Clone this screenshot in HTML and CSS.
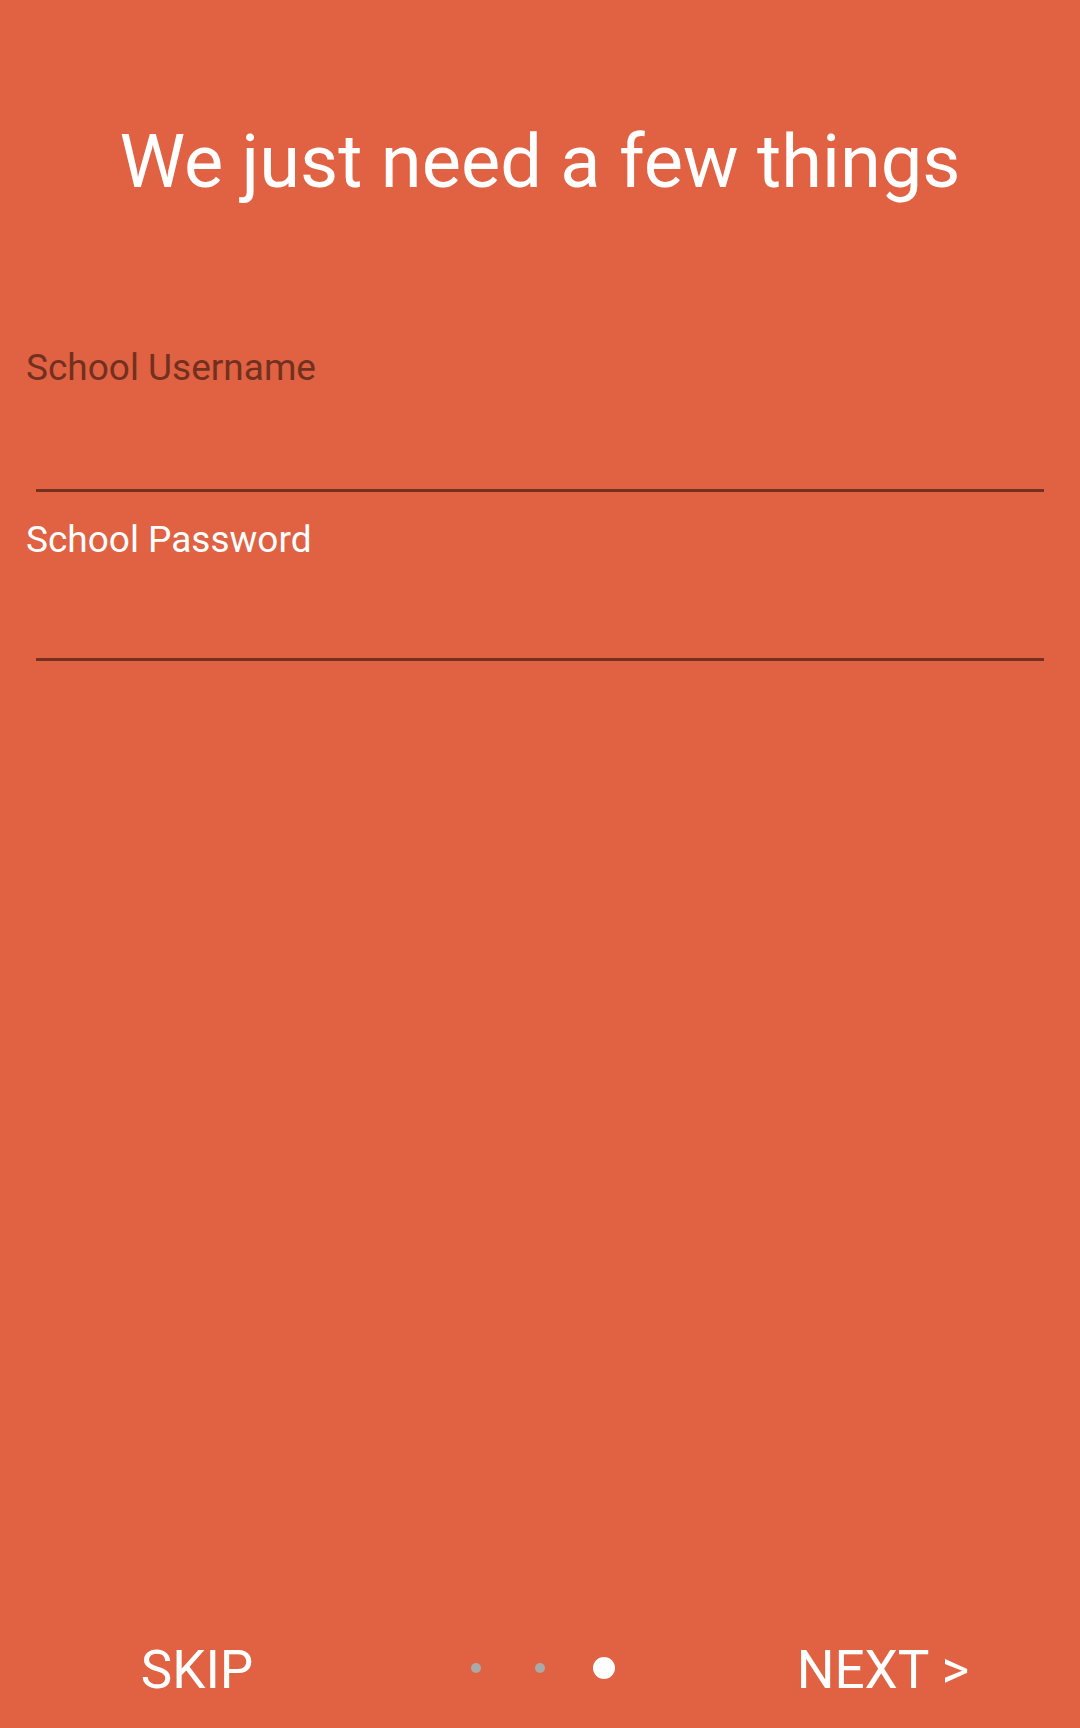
FILE: index.html
```html
<!DOCTYPE html>
<html lang="en">
<head>
<meta charset="utf-8">
<title>We just need a few things</title>
<link rel="stylesheet" href="styles.css">
</head>
<body>
<div class="screen">
  <h1 class="title">We just need a few things</h1>
  <form class="form">
    <div class="field field-first">
      <label class="label label-focused">School Username</label>
      <div class="input input-first"></div>
    </div>
    <div class="field field-second">
      <label class="label">School Password</label>
      <div class="input input-second"></div>
    </div>
  </form>
  <div class="footer">
    <div class="btn">SKIP</div>
    <div class="dots">
      <span class="dot"></span>
      <span class="dot"></span>
      <span class="dot dot-active"></span>
    </div>
    <div class="btn">NEXT &gt;</div>
  </div>
</div>
</body>
</html>
```

FILE: styles.css
```css
html, body {
  margin: 0;
  padding: 0;
}
body {
  background: #E06242;
  font-family: Roboto, "Noto Sans", "Liberation Sans", sans-serif;
  color: #ffffff;
}
.screen {
  width: 1080px;
  height: 1728px;
  display: flex;
  flex-direction: column;
  background: #E06242;
}
.title {
  margin: 125px 0 0 0;
  font-size: 74px;
  line-height: 74px;
  font-weight: 400;
  text-align: center;
  letter-spacing: 0;
}
.form {
  flex: 1;
  display: flex;
  flex-direction: column;
}
.field {
  display: flex;
  flex-direction: column;
}
.field-first {
  margin-top: 150px;
}
.field-second {
  margin-top: 29px;
}
.label {
  padding-left: 26px;
  font-size: 37px;
  line-height: 37px;
  color: #ffffff;
}
.label-focused {
  color: #73301f;
}
.input {
  margin: 0 36px;
  border-bottom: 3px solid #73301f;
}
.input-first {
  height: 103px;
}
.input-second {
  height: 100px;
}
.footer {
  display: grid;
  grid-template-columns: 394px 1fr 394px;
  align-items: center;
  padding-bottom: 31px;
}
.btn {
  text-align: center;
  font-size: 53px;
  line-height: 53px;
  color: #ffffff;
}
.dots {
  display: flex;
  justify-content: center;
  align-items: center;
  gap: 54px;
  padding-left: 6px;
  margin-top: -6px;
}
.dot {
  width: 10px;
  height: 10px;
  border-radius: 50%;
  background: #a9a9a9;
}
.dot-active {
  width: 22px;
  height: 22px;
  background: #ffffff;
  margin-left: -6px;
}
```
